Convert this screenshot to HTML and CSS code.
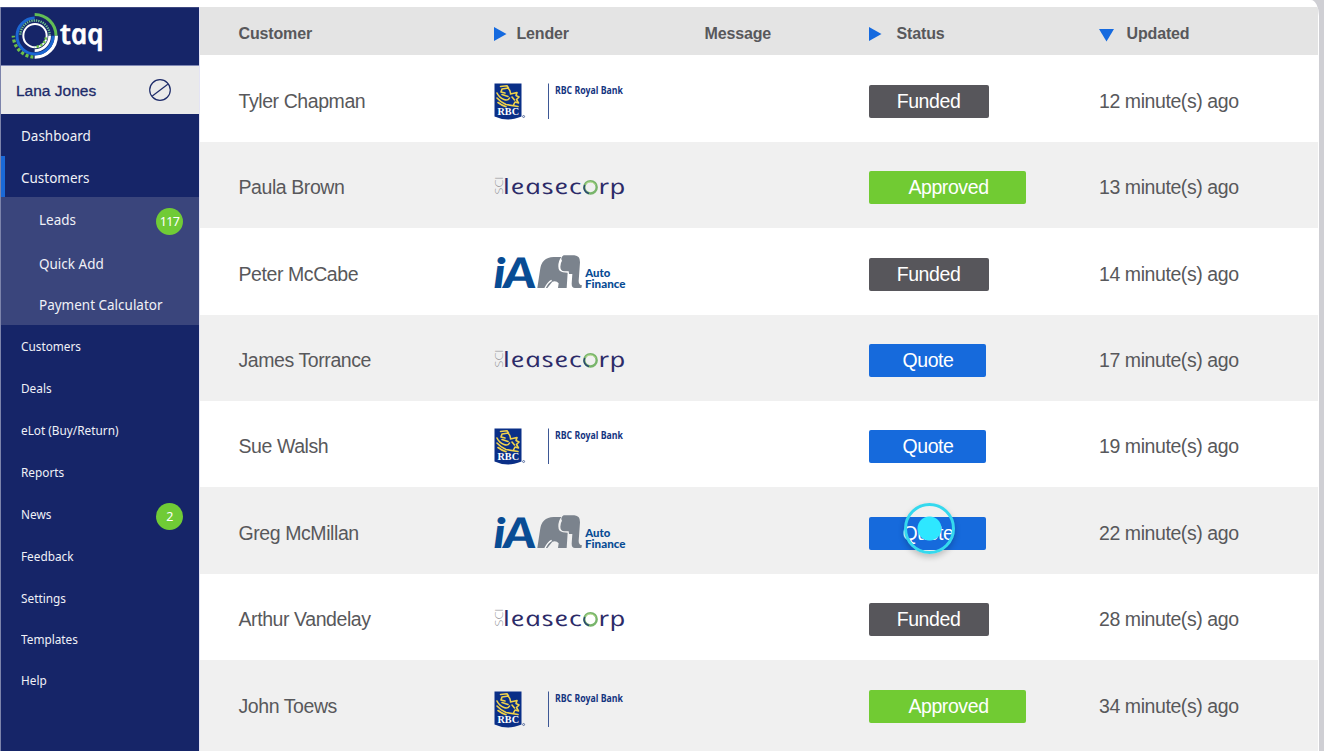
FILE: index.html
```html
<!DOCTYPE html>
<html lang="en">
<head>
<meta charset="utf-8">
<title>taq – Customers</title>
<link rel="stylesheet" href="styles.css">
</head>
<body>
<div class="app">
  <aside class="sidebar">
    <div class="brand">
      <svg width="120" height="59" viewBox="0 21 360 177">
        <g fill="none">
          <circle cx="105" cy="107" r="35" stroke="#fff" stroke-width="6"/>
          <path d="M104 43.500A64 64 0 0 1 168 107" stroke="#62bd55" stroke-width="9"/>
          <path d="M169 107A64 64 0 0 1 104 171" stroke="#fff" stroke-width="10"/>
          <path d="M100 171A65 65 0 0 1 40 107" stroke="#6cc04a" stroke-width="10" stroke-dasharray="9 6"/>
          <path d="M104 54A54 54 0 1 0 159 107" stroke="#1b66d2" stroke-width="9"/>
          <path d="M61 104A44 44 0 0 1 149 107" stroke="#6fc28a" stroke-width="7" stroke-dasharray="4 3"/>
          <path d="M149 107A45 45 0 0 1 104 152" stroke="#fff" stroke-width="8"/>
          <path d="M138 112A33 33 0 0 1 104 141" stroke="#6cc04a" stroke-width="8" stroke-dasharray="7 5"/>
        </g>
        <text transform="translate(186 132) skewX(12)" class="brand-text" textLength="130" lengthAdjust="spacingAndGlyphs">taq</text>
      </svg>
    </div>
    <div class="user">
      <span class="user-name">Lana Jones</span>
      <svg class="user-icon" width="24" height="24" viewBox="0 0 24 24" fill="none" stroke="#1d2b69" stroke-width="1.200"><circle cx="12" cy="12" r="10.300"/><path d="M4.300 18L19.800 6.300"/></svg>
    </div>
    <ul class="nav nav-top">
      <li><span>Dashboard</span></li>
      <li class="current"><span>Customers</span></li>
    </ul>
    <ul class="nav nav-sub">
      <li><span>Leads</span><b class="count">117</b></li>
      <li><span>Quick Add</span></li>
      <li><span>Payment Calculator</span></li>
    </ul>
    <ul class="nav nav-more">
      <li><span>Customers</span></li>
      <li><span>Deals</span></li>
      <li><span>eLot (Buy/Return)</span></li>
      <li><span>Reports</span></li>
      <li><span>News</span><b class="count">2</b></li>
      <li><span>Feedback</span></li>
      <li><span>Settings</span></li>
      <li><span>Templates</span></li>
      <li><span>Help</span></li>
    </ul>
  </aside>
  <main class="panel">
    <div class="head">
      <span>Customer</span>
      <span class="sort"><svg width="14" height="16" viewBox="0 0 14 16"><path d="M0 1V15L12.500 8Z" fill="#156adf"/></svg>Lender</span>
      <span>Message</span>
      <span class="sort wide"><svg width="14" height="16" viewBox="0 0 14 16"><path d="M0 1V15L12.500 8Z" fill="#156adf"/></svg>Status</span>
      <span class="sort"><svg class="down" width="16" height="14" viewBox="0 0 16 14"><path d="M0 1H15L7.500 13.500Z" fill="#156adf"/></svg>Updated</span>
    </div>
    <div class="rows" id="rows"></div>
  </main>
</div>
<script src="script.js"></script>
</body>
</html>
```

FILE: script.js
```js
const logos = {
  rbc: `
    <path d="M.5 27.500H27.500V60.500Q20 63.500 14 63.500Q7 63.500 .5 60.500Z" fill="#0a2f87"/>
    <g fill="none" stroke="#f0d24b" stroke-width="1.600" stroke-linecap="round" stroke-linejoin="round">
      <path d="M6.500 30.500L13 29.800L14.500 32L8 33L7 36L11 37M14 32Q17 35 16.500 38L23 36.500L22 39.500L25 41L22.500 43.500L24.500 47L21 46L19.500 49"/>
      <path d="M3 37Q5 41.500 10 43.500Q14 45 15.500 42M3 42Q7 46.500 12 48.500L24 50.500M8 38.500L14 40.500M4 46.500Q8 49.500 12 50.800M18 41L20.500 44"/>
    </g>
    <text x="3.500" y="59" class="rbc-mark" textLength="21.500" lengthAdjust="spacingAndGlyphs">RBC</text>
    <circle cx="29.600" cy="60.500" r="1" fill="none" stroke="#3c568f" stroke-width=".8"/>
    <path d="M54.500 27.500V63" stroke="#3d5795" stroke-width="1"/>
    <text x="61" y="37.500" class="rbc-name" textLength="68" lengthAdjust="spacingAndGlyphs">RBC Royal Bank</text>`,
  lease: `
    <text transform="translate(8.500 52.500) rotate(-90)" class="sci" textLength="18" lengthAdjust="spacingAndGlyphs">SCI</text>
    <text transform="translate(10.500 52) scale(1.32 1) skewX(12)" class="lease-text" textLength="59.500" lengthAdjust="spacing">leasec</text>
    <circle cx="96.500" cy="45.300" r="6.200" fill="none" stroke="#78b56b" stroke-width="2.400"/>
    <path d="M90.600 43A6.200 6.200 0 0 0 95 51.600" fill="none" stroke="#2a4672" stroke-width="1.500"/>
    <path d="M91.500 42A6.200 6.200 0 0 1 101.500 43" fill="none" stroke="#b4dc8c" stroke-width="1"/>
    <text transform="translate(106 52) scale(1.32 1) skewX(12)" class="lease-text" textLength="20.500" lengthAdjust="spacing">rp</text>`,
  ia: `
    <text x="-.5" y="60" class="ia-text" textLength="12" lengthAdjust="spacingAndGlyphs">i</text>
    <text transform="translate(10 60) skewX(4)" class="ia-text" textLength="33" lengthAdjust="spacingAndGlyphs">A</text>
    <g transform="translate(-9 17) scale(.33333)" fill="#7b838d">
      <path d="M157 129L165 76Q169 37 206 36H229Q220 47 220 64Q220 80 234 82L248 83L245 129H219L221 115Q214 106 202 110L187 129Z"/>
      <path d="M236 31H268Q286 33 285 52L281 108Q281 120 291 121L289 129H270Q260 129 260 116L262 87H252L251 79H238Q226 78 226 65Q226 54 231 47Q225 39 236 31Z"/>
      <path d="M200 106Q188 112 180 130" fill="none" stroke="#fff" stroke-width="4"/>
    </g>
    <text x="91.300" y="49.300" class="ia-sub" textLength="25" lengthAdjust="spacingAndGlyphs">Auto</text>
    <text x="91" y="60" class="ia-sub" textLength="40.500" lengthAdjust="spacingAndGlyphs">Finance</text>`
};

const deals = [
  ["Tyler Chapman", "rbc", "Funded", 12],
  ["Paula Brown", "lease", "Approved", 13],
  ["Peter McCabe", "ia", "Funded", 14],
  ["James Torrance", "lease", "Quote", 17],
  ["Sue Walsh", "rbc", "Quote", 19],
  ["Greg McMillan", "ia", "Quote", 22],
  ["Arthur Vandelay", "lease", "Funded", 28],
  ["John Toews", "rbc", "Approved", 34]
];
const activeRow = 5;

document.getElementById("rows").innerHTML = deals.map(([name, lender, status, minutes], i) => `
  <div class="row">
    <span>${name}</span>
    <svg class="lender" viewBox="0 0 140 86">${logos[lender]}</svg>
    <span class="badge ${status.toLowerCase()}">${status}${i === activeRow ? '<i class="pointer"></i>' : ""}</span>
    <span class="ago">${minutes} minute(s) ago</span>
  </div>`).join("");
```

FILE: styles.css
```css
* { box-sizing: border-box; }
body {
  margin: 0;
  height: 751px;
  overflow: hidden;
  background: #cfcfd4;
  font-family: "Liberation Sans", Arial, sans-serif;
  color: #58585b;
}
.app {
  display: flex;
  width: 1319px;
  height: 751px;
  padding-top: 7px;
  background: #fff;
  border-top-right-radius: 8px 16px;
  overflow: hidden;
}

/* Sidebar */
.sidebar {
  width: 200px;
  flex: none;
  background: #162568;
  border-left: 1px solid #7d84ab;
  border-right: 1px solid #e4e4f4;
}
.brand { height: 58px; border-top: 1px solid #3d4880; }
.brand svg { display: block; margin: -1px 0 0 -1px; }
.brand-text { font: italic 600 86px "Open Sans", sans-serif; fill: #fff; stroke: #fff; stroke-width: 2; }
.user {
  display: flex;
  align-items: center;
  justify-content: space-between;
  height: 49px;
  padding: 0 27px 0 15px;
  background: #eaeaea;
  border-top: 1px solid #8088b4;
}
.user-name {
  margin-top: 2px;
  font-size: 15.5px;
  color: #1d2b69;
  -webkit-text-stroke: .3px #1d2b69;
}
.nav {
  display: grid;
  margin: 0;
  padding: 0;
  list-style: none;
  font: 14.5px "Noto Sans", sans-serif;
  color: #f0f1f7;
}
.nav li {
  display: flex;
  align-items: center;
  justify-content: space-between;
  padding: 0 16px 1px 20px;
}
.nav li > span { transform: scaleX(.93); transform-origin: left; white-space: nowrap; }
.nav-top { grid-template-rows: 42px 41px; }
.nav .current { border-left: 4px solid #1a69d8; padding-left: 16px; padding-bottom: 0; }
.nav-sub { grid-template-rows: 46px 42px 40px; background: #3a457c; }
.nav-sub li { padding-left: 38px; padding-bottom: 2px; }
.nav-more {
  grid-template-rows: 42px 43px 41.5px 42.5px 41.5px 41.5px 42px 40.5px 41px;
  font-size: 12.7px;
}
.count {
  display: flex;
  align-items: center;
  justify-content: center;
  width: 27px;
  height: 27px;
  margin-top: 4px;
  border-radius: 50%;
  background: #70cb36;
  font: 12.5px "Noto Sans", sans-serif;
  letter-spacing: -.6px;
  color: #fff;
}

/* Table */
.panel { width: 1118px; flex: none; }
.head, .row { display: grid; align-items: center; padding-left: 38.5px; }
.head {
  grid-template-columns: 255px 211px 164px 231px 1fr;
  height: 48.4px;
  padding-top: 5px;
  background: #e4e4e4;
  font-size: 16px;
  font-weight: 700;
  letter-spacing: -.15px;
}
.sort { display: flex; align-items: center; gap: 9px; }
.sort.wide { gap: 14px; }
.sort .down { margin: 3px 1px 0 -1px; }
.sort:last-child { gap: 11px; }
.row {
  grid-template-columns: 255.5px 374.5px 230.5px 1fr;
  height: 86.4px;
  font-size: 19.5px;
  letter-spacing: -.42px;
}
.row:nth-child(even) { background: #f0f0f0; }
.row:last-child { box-shadow: 0 6px #f0f0f0; }
.row > span { margin-top: 5.7px; }
.lender { width: 140px; height: 86px; overflow: visible; }
.row:last-child .lender { transform: translateY(4px); }
.badge {
  position: relative;
  display: flex;
  align-items: center;
  justify-content: center;
  height: 33px;
  border-radius: 2px;
  color: #fff;
}
.funded { width: 120px; background: #57565b; }
.approved { width: 157px; padding-left: 3px; background: #71cb33; }
.quote { width: 117px; padding-left: 2px; background: #166adc; }
.pointer {
  position: absolute;
  left: 35px;
  top: -14px;
  width: 51px;
  height: 51px;
  border: 3px solid #35d9ee;
  border-radius: 50%;
  background: radial-gradient(circle, #2ee7ff 11.5px, transparent 12.5px);
  box-shadow: 0 3px 6px rgba(0, 0, 0, .22);
}

/* Lender logos */
.lender text { letter-spacing: 0; }
.rbc-mark { font: 700 9.5px "Liberation Serif", serif; fill: #fff; }
.rbc-name { font: 700 10px "Open Sans", sans-serif; fill: #14347f; }
.sci { font: 300 11.5px "Open Sans", sans-serif; fill: #909096; }
.lease-text { font: italic 400 21px "Open Sans", sans-serif; fill: #2c2b68; }
.ia-text { font: italic 900 42px Lato, sans-serif; fill: #084c94; }
.ia-sub { font: 900 10.5px Lato, sans-serif; fill: #084c94; }
```
